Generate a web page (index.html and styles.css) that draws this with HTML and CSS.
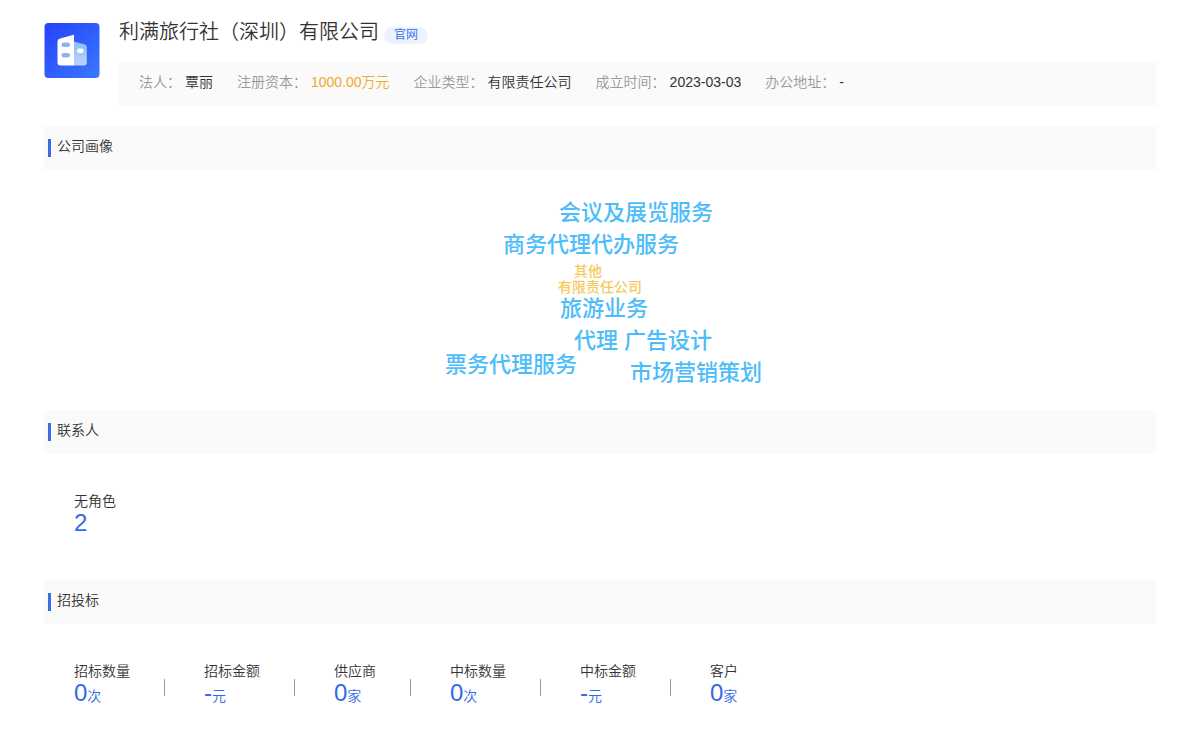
FILE: index.html
```html
<!DOCTYPE html>
<html lang="zh-CN">
<head>
<meta charset="utf-8">
<title>利满旅行社（深圳）有限公司</title>
<link rel="stylesheet" href="styles.css">
</head>
<body>
<main class="page">
  <header class="company">
    <svg class="logo" viewBox="0 0 55 55" aria-hidden="true">
      <defs>
        <linearGradient id="bg" x1="0" y1="0" x2="1" y2="1"><stop offset="0" stop-color="#2543fb"/><stop offset="1" stop-color="#3a78fc"/></linearGradient>
        <linearGradient id="side" x1="0" y1="0" x2="0" y2="1"><stop offset="0" stop-color="#8fbcfb"/><stop offset="1" stop-color="#b9d3fb"/></linearGradient>
      </defs>
      <rect width="55" height="55" rx="4" fill="url(#bg)"/>
      <path d="M29.500 18.500 40 21.300Q42.300 22 42.300 24V39.500Q42.300 42.500 39.300 42.500H29.500Z" fill="url(#side)"/>
      <path d="M15.500 15.400 29.500 11.800V42.500H16Q13 42.500 13 39.500V18.400Q13 16 15.500 15.400Z" fill="#fff"/>
      <rect x="17" y="19.500" width="8.500" height="4.500" rx="2.250" fill="#8db4ee"/>
      <rect x="17" y="30" width="8.500" height="4.500" rx="2.250" fill="#8db4ee"/>
      <rect x="32.500" y="25.500" width="6.500" height="4.500" rx="2.250" fill="#fff"/>
    </svg>
    <div class="summary">
      <div class="title-row">
        <h1 class="name">利满旅行社（深圳）有限公司</h1>
        <a class="site" href="#">官网</a>
      </div>
      <dl class="facts">
        <div class="fact"><dt>法人：</dt><dd>覃丽</dd></div>
        <div class="fact"><dt>注册资本：</dt><dd class="money">1000.00万元</dd></div>
        <div class="fact"><dt>企业类型：</dt><dd>有限责任公司</dd></div>
        <div class="fact"><dt>成立时间：</dt><dd>2023-03-03</dd></div>
        <div class="fact"><dt>办公地址：</dt><dd>-</dd></div>
      </dl>
    </div>
  </header>

  <section>
    <h2 class="heading">公司画像</h2>
    <div class="cloud-area">
      <div class="cloud">
        <span class="word w1">会议及展览服务</span>
        <span class="word w2">商务代理代办服务</span>
        <span class="word minor w3">其他</span>
        <span class="word minor w4">有限责任公司</span>
        <span class="word w5">旅游业务</span>
        <span class="word w6">代理</span>
        <span class="word w7">广告设计</span>
        <span class="word w8">票务代理服务</span>
        <span class="word w9">市场营销策划</span>
      </div>
    </div>
  </section>

  <section>
    <h2 class="heading">联系人</h2>
    <dl class="stats">
      <div class="stat"><dt>无角色</dt><dd>2</dd></div>
    </dl>
  </section>

  <section>
    <h2 class="heading">招投标</h2>
    <dl class="stats">
      <div class="stat"><dt>招标数量</dt><dd>0<small>次</small></dd></div>
      <div class="stat"><dt>招标金额</dt><dd>-<small>元</small></dd></div>
      <div class="stat"><dt>供应商</dt><dd>0<small>家</small></dd></div>
      <div class="stat"><dt>中标数量</dt><dd>0<small>次</small></dd></div>
      <div class="stat"><dt>中标金额</dt><dd>-<small>元</small></dd></div>
      <div class="stat"><dt>客户</dt><dd>0<small>家</small></dd></div>
    </dl>
  </section>
</main>
</body>
</html>
```
FILE: styles.css
```css
* { box-sizing: border-box; }

body {
  margin: 0;
  background: #fff;
  color: #333;
  font: 350 14px/20px "Liberation Sans", "Noto Sans CJK SC", sans-serif;
}

h1, h2, dl, dd { margin: 0; font-weight: inherit; }

.page { padding: 18px 44px 0; }

.company {
  display: flex;
  gap: 19px;
  margin-bottom: 20px;
}

.logo {
  flex: none;
  width: 56px;
  height: 55px;
  margin-top: 5px;
}

.summary { flex: 1; min-width: 0; }

.title-row {
  display: flex;
  align-items: flex-end;
  gap: 5px;
  margin-bottom: 18px;
}

.name { padding-top: 2px; font-size: 20px; line-height: 24px; }

.site {
  padding: 0 10px;
  border-radius: 9px;
  background: #edf3fe;
  color: #3468f0;
  font-size: 12px;
  line-height: 17px;
  text-decoration: none;
}

.facts {
  display: flex;
  flex-wrap: wrap;
  gap: 0 24px;
  padding: 10px 20px 14px;
  background: #fafafa;
}

.fact { display: flex; gap: 4px; }
.fact dt { color: #999; }
.fact .money { color: #f0a830; }

.heading {
  display: flex;
  align-items: center;
  gap: 6px;
  height: 44px;
  padding: 0 4px 4px;
  background: #fafafa;
  font-size: 14px;
  line-height: 20px;
}

.heading::before {
  content: "";
  width: 3px;
  height: 18px;
  margin-top: 4px;
  background: #3a6be8;
}

.cloud-area { display: flex; justify-content: center; padding: 20px 0; }

.cloud { position: relative; width: 320px; height: 200px; }

.word {
  position: absolute;
  color: #4dbcfa;
  font-size: 22px;
  font-weight: 500;
  line-height: 32px;
  white-space: nowrap;
}

.minor { color: #f6c95c; font-size: 14px; line-height: 16px; }

.w1 { left: 119px; top: 7px; }
.w2 { left: 63px; top: 39px; }
.w3 { left: 134px; top: 73px; }
.w4 { left: 118px; top: 89px; }
.w5 { left: 120px; top: 103px; }
.w6 { left: 134px; top: 135px; }
.w7 { left: 184px; top: 135px; }
.w8 { left: 5px; top: 159px; }
.w9 { left: 190px; top: 167px; }

.stats {
  display: flex;
  flex-wrap: wrap;
  padding: 37px 30px 45px;
}

.stat { display: flex; flex-direction: column; position: relative; }

.stat + .stat { margin-left: 74px; }

.stat + .stat::before {
  content: "";
  position: absolute;
  left: -40px;
  top: 18px;
  width: 1px;
  height: 17px;
  background: #999;
}

.stat dd { color: #3468e8; font-size: 24px; line-height: 24px; }
.stat small { font-size: 14px; }
```
